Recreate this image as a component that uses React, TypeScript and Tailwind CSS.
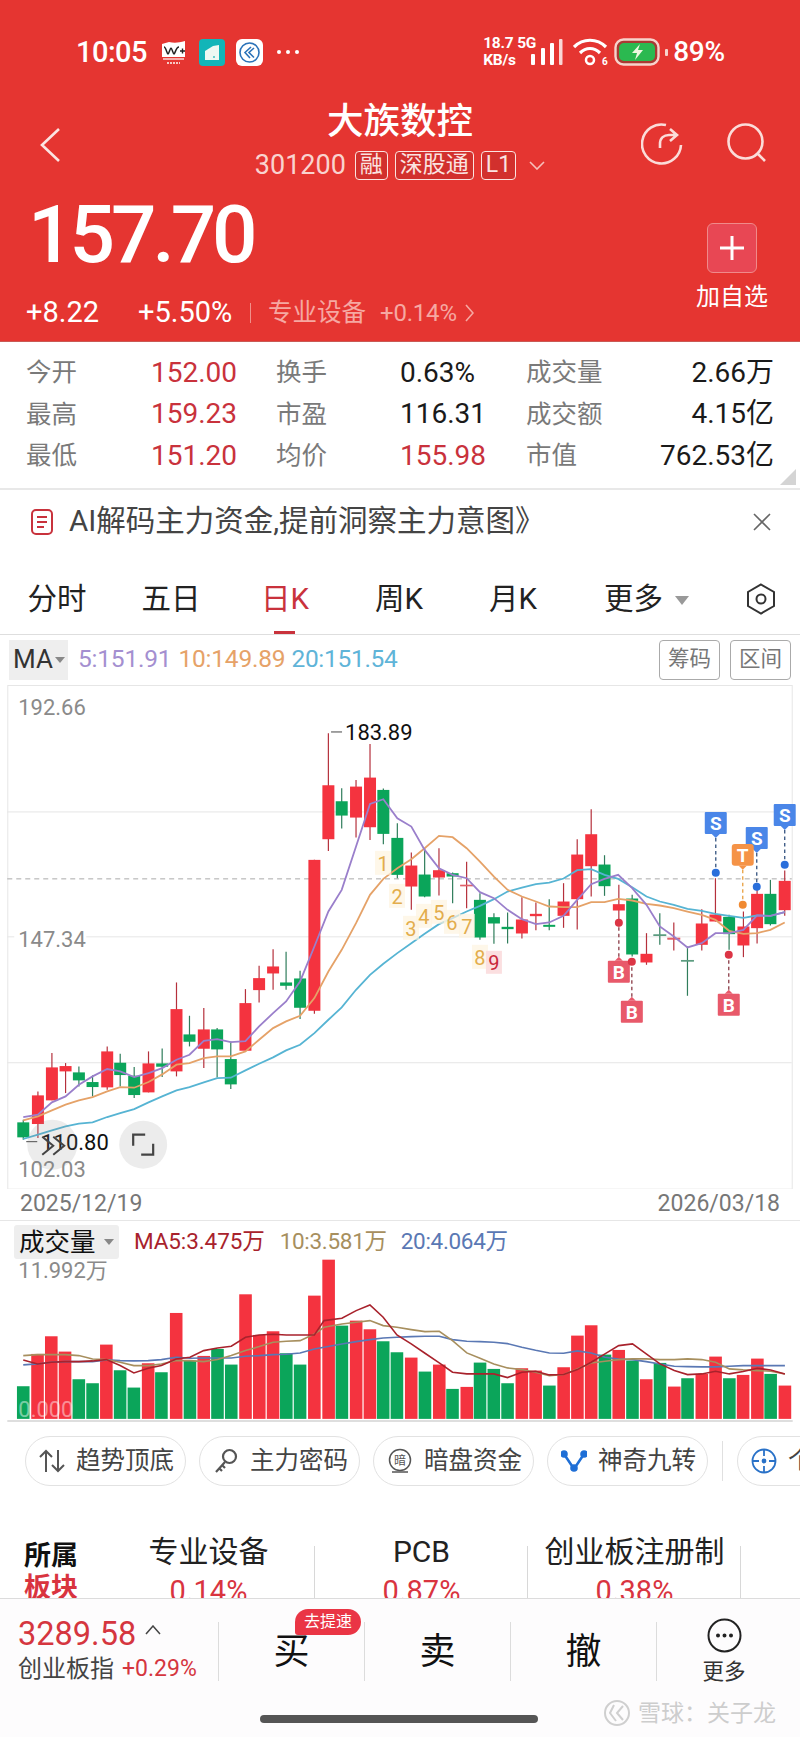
import React from "react";

type Candle = [number, number, number, number, number, 0 | 1];

// measured from the left half of the chart
const leftCandles: Candle[] = [
  [69, 1328, 1373, 1320, 1380, 0], [113, 1247, 1333, 1235, 1375, 1], [155, 1163, 1262, 1120, 1262, 1],
  [196, 1159, 1175, 1150, 1240, 1], [236, 1178, 1202, 1160, 1220, 0], [277, 1207, 1222, 1187, 1250, 0],
  [321, 1115, 1223, 1100, 1230, 1], [360, 1149, 1186, 1122, 1220, 0], [402, 1188, 1246, 1162, 1255, 0],
  [445, 1151, 1238, 1115, 1238, 1], [486, 1151, 1161, 1106, 1192, 0], [529, 988, 1175, 908, 1190, 1],
  [568, 1064, 1086, 1008, 1100, 0], [611, 1049, 1107, 985, 1165, 1], [651, 1049, 1109, 1045, 1193, 0],
  [692, 1138, 1214, 1085, 1228, 0], [736, 970, 1113, 928, 1113, 1], [777, 895, 931, 858, 968, 1],
  [819, 860, 881, 808, 930, 1], [858, 908, 918, 816, 930, 0], [900, 896, 984, 873, 1018, 0],
  [943, 540, 993, 540, 1002, 1], [985, 316, 478, 160, 513, 1], [1025, 364, 407, 325, 446, 0],
  [1068, 320, 413, 300, 473, 1], [1110, 293, 442, 192, 480, 1], [1150, 330, 462, 326, 493, 0],
  [1192, 474, 585, 430, 595, 0],
];

// right half
const rightCandles: Candle[] = [
  [34, 257, 320, 218, 390, 1], [74, 284, 350, 205, 352, 0], [117, 271, 293, 205, 347, 1],
  [158, 280, 290, 278, 370, 0], [200, 316, 318, 246, 385, 1], [240, 360, 473, 340, 480, 0],
  [282, 412, 431, 400, 492, 0], [323, 441, 448, 398, 491, 0], [366, 419, 461, 352, 476, 1],
  [408, 402, 409, 368, 451, 1], [448, 435, 441, 358, 451, 0], [491, 365, 408, 310, 444, 1],
  [532, 224, 358, 178, 449, 1], [574, 163, 259, 88, 350, 1], [614, 254, 319, 226, 348, 0],
  [657, 373, 392, 315, 440, 1], [697, 356, 524, 345, 530, 0], [740, 522, 548, 460, 555, 1],
  [780, 465, 467, 400, 495, 0], [822, 475, 478, 428, 512, 1], [863, 542, 544, 500, 648, 0],
  [906, 431, 495, 388, 512, 1], [947, 404, 425, 295, 425, 1], [988, 411, 463, 405, 510, 0],
  [1031, 440, 497, 395, 532, 1], [1072, 342, 445, 330, 491, 1], [1112, 342, 433, 300, 437, 0],
  [1155, 303, 391, 272, 408, 1],
];

const candles = [
  ...leftCandles.map((c) => ({ x: c[0] / 3, top: 680 + c[1] / 3, bottom: 680 + c[2] / 3, high: 680 + c[3] / 3, low: 680 + c[4] / 3, up: c[5] === 1 })),
  ...rightCandles.map((c) => ({ x: 400 + c[0] / 3, top: 780 + c[1] / 3, bottom: 780 + c[2] / 3, high: 780 + c[3] / 3, low: 780 + c[4] / 3, up: c[5] === 1 })),
];

const linePoints = (left: number[][], right: number[][]) =>
  [
    ...left.map(([x, y]) => `${x / 3},${680 + y / 3}`),
    ...right.map(([x, y]) => `${400 + x / 3},${780 + y / 3}`),
  ].join(" ");

const ma5 = linePoints(
  [[69, 1312], [113, 1305], [155, 1268], [196, 1250], [236, 1215], [277, 1190], [321, 1168], [360, 1175], [402, 1192], [445, 1180], [486, 1165], [529, 1140], [568, 1125], [611, 1083], [651, 1078], [692, 1087], [736, 1084], [777, 1040], [819, 1000], [858, 965], [900, 905], [943, 800], [985, 695], [1025, 630], [1068, 500], [1110, 372], [1150, 358], [1192, 415]],
  [[34, 140], [74, 210], [117, 265], [158, 285], [200, 295], [240, 337], [282, 355], [323, 390], [366, 418], [408, 433], [448, 428], [491, 408], [532, 360], [574, 313], [614, 297], [655, 285], [697, 325], [740, 375], [780, 440], [822, 470], [863, 503], [906, 490], [947, 460], [988, 460], [1031, 450], [1072, 407], [1112, 408], [1155, 397]]
);
const ma10 = linePoints(
  [[69, 1322], [113, 1310], [155, 1292], [196, 1275], [236, 1262], [277, 1252], [321, 1235], [360, 1222], [402, 1224], [445, 1207], [486, 1184], [529, 1155], [568, 1150], [611, 1135], [651, 1130], [692, 1130], [736, 1115], [777, 1080], [819, 1045], [858, 1025], [900, 1008], [943, 955], [985, 875], [1025, 810], [1068, 730], [1110, 645], [1150, 597], [1192, 565]],
  [[34, 238], [74, 205], [117, 168], [158, 172], [200, 205], [240, 245], [282, 290], [323, 330], [366, 350], [408, 365], [448, 380], [491, 382], [532, 382], [574, 367], [614, 367], [655, 357], [697, 362], [740, 372], [780, 377], [822, 385], [863, 395], [906, 405], [947, 420], [988, 453], [1031, 462], [1072, 460], [1112, 450], [1155, 428]]
);
const ma20 = linePoints(
  [[69, 1378], [113, 1365], [155, 1352], [196, 1340], [236, 1332], [277, 1328], [321, 1312], [360, 1300], [402, 1288], [445, 1268], [486, 1250], [529, 1232], [568, 1222], [611, 1208], [651, 1195], [692, 1194], [736, 1172], [777, 1152], [819, 1133], [858, 1112], [900, 1095], [943, 1060], [985, 1020], [1025, 983], [1068, 930], [1110, 885], [1150, 852], [1192, 820]],
  [[34, 490], [74, 462], [117, 433], [158, 415], [200, 395], [240, 378], [282, 358], [323, 335], [366, 323], [408, 313], [448, 308], [491, 296], [532, 271], [574, 268], [614, 285], [655, 297], [697, 322], [740, 350], [780, 365], [822, 375], [863, 387], [906, 393], [947, 402], [988, 408], [1031, 414], [1072, 407], [1112, 408], [1155, 397]]
);

const volumes: [number, number, 0 | 1][] = [
  [45, 532, 0], [73, 435, 1], [100, 382, 1], [127, 428, 1], [154, 511, 0], [181, 523, 0], [208, 407, 1], [235, 484, 0],
  [262, 536, 0], [290, 463, 1], [316, 490, 0], [345, 312, 1], [372, 455, 0], [399, 441, 1], [426, 420, 0], [453, 467, 0],
  [481, 256, 1], [508, 378, 1], [535, 367, 1], [561, 433, 0], [588, 467, 0], [616, 260, 1], [644, 152, 1], [670, 350, 0],
  [698, 335, 1], [725, 361, 1], [751, 397, 0], [778, 430, 0], [806, 446, 1], [833, 488, 0], [861, 467, 1], [887, 540, 0],
  [915, 534, 1], [941, 461, 0], [968, 480, 0], [995, 523, 0], [1023, 478, 1], [1050, 485, 1], [1077, 530, 0], [1105, 475, 1],
  [1132, 380, 1], [1159, 349, 1], [1186, 437, 0], [1213, 423, 1], [1240, 455, 0], [1267, 511, 1], [1294, 462, 0], [1322, 533, 1],
  [1348, 508, 0], [1376, 495, 1], [1403, 443, 1], [1430, 508, 0], [1457, 498, 1], [1485, 449, 1], [1511, 495, 0], [1539, 530, 1],
];

const volPoints = (pts: number[][]) => pts.map(([x, y]) => `${x / 1.96},${1210 + y / 3}`).join(" ");

const volMa5 = volPoints([[45, 453], [73, 465], [100, 460], [127, 458], [154, 458], [181, 456], [208, 452], [235, 470], [262, 492], [290, 478], [316, 470], [345, 450], [372, 445], [399, 425], [426, 417], [453, 412], [481, 385], [508, 378], [535, 376], [561, 378], [588, 378], [616, 378], [635, 335], [670, 328], [698, 305], [725, 288], [751, 325], [778, 378], [806, 405], [833, 433], [861, 462], [887, 490], [915, 495], [941, 495], [968, 495], [995, 506], [1023, 490], [1050, 487], [1077, 498], [1105, 497], [1132, 482], [1159, 460], [1186, 435], [1213, 410], [1240, 405], [1267, 435], [1294, 465], [1322, 485], [1348, 497], [1376, 495], [1403, 487], [1430, 495], [1457, 488], [1485, 478], [1511, 483], [1539, 495]]);
const volMa10 = volPoints([[45, 440], [73, 437], [100, 437], [127, 437], [154, 440], [181, 450], [208, 452], [235, 460], [262, 470], [290, 470], [316, 465], [345, 455], [372, 455], [399, 458], [426, 452], [453, 440], [481, 425], [508, 413], [535, 400], [561, 397], [588, 395], [616, 375], [635, 355], [670, 345], [698, 340], [725, 335], [751, 350], [778, 355], [806, 362], [833, 368], [861, 367], [887, 395], [915, 432], [941, 448], [968, 465], [995, 477], [1023, 482], [1050, 490], [1077, 500], [1105, 497], [1132, 480], [1159, 462], [1186, 457], [1213, 452], [1240, 450], [1267, 450], [1294, 452], [1322, 452], [1348, 450], [1376, 452], [1403, 460], [1430, 480], [1457, 483], [1485, 485], [1511, 487], [1539, 495]]);
const volMa20 = volPoints([[45, 468], [73, 465], [100, 460], [127, 458], [154, 458], [181, 458], [208, 453], [235, 455], [262, 456], [290, 455], [316, 452], [345, 445], [372, 448], [399, 447], [426, 447], [453, 447], [481, 442], [508, 440], [535, 437], [561, 436], [588, 432], [616, 420], [635, 415], [670, 405], [698, 398], [725, 392], [751, 387], [778, 385], [806, 383], [833, 382], [861, 382], [887, 392], [915, 397], [941, 398], [968, 400], [995, 404], [1023, 415], [1050, 424], [1077, 432], [1105, 433], [1132, 426], [1159, 432], [1186, 445], [1213, 450], [1240, 452], [1267, 458], [1294, 465], [1322, 472], [1348, 473], [1376, 474], [1403, 474], [1430, 472], [1457, 470], [1485, 470], [1511, 470], [1539, 470]]);

const nineTurn = [
  { n: "1", x: 383, y: 863 }, { n: "2", x: 397, y: 896 }, { n: "3", x: 411, y: 928 },
  { n: "4", x: 424, y: 916 }, { n: "5", x: 439, y: 912 }, { n: "6", x: 452, y: 922 },
  { n: "7", x: 467, y: 926 }, { n: "8", x: 480, y: 957 },
];

// trade flags, S and T hang above their dot, B below it
const flags = [
  { label: "S", x: 716, top: 812, dot: 873, color: "#4a86e8", dotColor: "#2a6fdb" },
  { label: "S", x: 757, top: 827, dot: 887, color: "#4a86e8", dotColor: "#2a6fdb" },
  { label: "S", x: 785, top: 804, dot: 865, color: "#4a86e8", dotColor: "#2a6fdb" },
  { label: "T", x: 743, top: 844, dot: 905, color: "#f59347", dotColor: "#f08a32" },
  { label: "B", x: 619, top: 961, dot: 923, color: "#e8596a", dotColor: "#dc3545" },
  { label: "B", x: 632, top: 1001, dot: 962, color: "#e8596a", dotColor: "#dc3545" },
  { label: "B", x: 729, top: 994, dot: 955, color: "#e8596a", dotColor: "#dc3545" },
];

const stats = [
  ["今开", "152.00", "换手", "0.63%", "成交量", "2.66万"],
  ["最高", "159.23", "市盈", "116.31", "成交额", "4.15亿"],
  ["最低", "151.20", "均价", "155.98", "市值", "762.53亿"],
];

const KLineChart = () => (
  <svg viewBox="0 680 800 510" className="block w-[800px] h-[510px]">
    <rect x="7.5" y="685.5" width="785" height="504" fill="none" stroke="#e6e6e6" />
    {[812, 937, 1063].map((y) => (
      <line key={y} x1="7" x2="792" y1={y} y2={y} stroke="#e6e6e6" />
    ))}
    <line x1="7" x2="792" y1="879" y2="879" stroke="#a9a9a9" strokeDasharray="5 4" />
    <text x="18" y="715" fontSize="22" fill="#8a8a8a">192.66</text>
    <rect x="14" y="926" width="72" height="24" fill="#fff" />
    <text x="18" y="947" fontSize="22" fill="#8a8a8a">147.34</text>
    <text x="18" y="1177" fontSize="22" fill="#8a8a8a">102.03</text>

    {candles.map((c, i) => (
      <g key={i}>
        <line x1={c.x} x2={c.x} y1={c.high} y2={c.low} stroke={c.up ? "#b5303c" : "#2f7d5b"} strokeWidth="1.2" />
        <rect
          x={c.x - 6}
          y={c.top}
          width="12"
          height={c.bottom - c.top}
          fill={c.up ? "#f4333f" : "#0ba55a"}
          stroke={c.bottom - c.top < 2 ? (c.up ? "#e0606a" : "#5d9b80") : "none"}
        />
      </g>
    ))}

    <polyline points={ma20} fill="none" stroke="#56b4d3" strokeWidth="1.8" />
    <polyline points={ma10} fill="none" stroke="#e5a268" strokeWidth="1.8" />
    <polyline points={ma5} fill="none" stroke="#9a7fcb" strokeWidth="1.8" />

    <line x1="331" x2="342" y1="732" y2="732" stroke="#444" />
    <text x="345" y="740" fontSize="22" fill="#111">183.89</text>

    {nineTurn.map((t) => (
      <g key={t.n}>
        <rect x={t.x - 8} y={t.y - 12} width="16" height="24" fill="#fdf3e0" opacity="0.7" />
        <text x={t.x} y={t.y + 8} fontSize="20" textAnchor="middle" fill="#e3ad4c">{t.n}</text>
      </g>
    ))}
    <rect x="486" y="951" width="16" height="23" fill="#fbdfe0" />
    <text x="494" y="970" fontSize="20" textAnchor="middle" fill="#c9283a">9</text>

    {flags.map((f, i) => {
      const above = f.label !== "B";
      const tipY = above ? f.top + 26 : f.top - 4;
      return (
        <g key={i}>
          <line x1={f.x} x2={f.x} y1={tipY} y2={f.dot} stroke={f.label === "T" ? "#e8a040" : f.label === "S" ? "#33527f" : "#8a3a45"} strokeWidth="1.3" strokeDasharray="3.5 3" />
          <circle cx={f.x} cy={f.dot} r="4" fill={f.dotColor} />
          <rect x={f.x - 11} y={f.top} width="22" height="22" fill={f.color} rx={f.label === "T" ? 3 : 1} />
          <polygon points={above ? `${f.x - 4},${f.top + 22} ${f.x + 4},${f.top + 22} ${f.x},${f.top + 26}` : `${f.x - 4},${f.top} ${f.x + 4},${f.top} ${f.x},${f.top - 4}`} fill={f.color} />
          <text x={f.x} y={f.top + 18} fontSize="19" fontWeight="700" textAnchor="middle" fill="#fff">{f.label}</text>
        </g>
      );
    })}

    <line x1="26" x2="37" y1="1142" y2="1142" stroke="#444" />
    <text x="41" y="1150" fontSize="22" fill="#111">110.80</text>
    <circle cx="52" cy="1145" r="25" fill="#8a8a8a" opacity="0.16" />
    <path d="M42 1137l11 9-11 9M53 1137l11 9-11 9" fill="none" stroke="#444" strokeWidth="2" />
    <circle cx="143" cy="1145" r="24" fill="#ececec" />
    <path d="M133 1146v-11h12M153 1144v11h-12" fill="none" stroke="#444" strokeWidth="2.2" />
  </svg>
);

const VolumeChart = () => (
  <svg viewBox="0 1260 800 164" className="block w-[800px] h-[164px]">
    <line x1="7" x2="793" y1="1422" y2="1422" stroke="#dedede" strokeWidth="2" />
    {volumes.map(([x, top, up], i) => (
      <rect key={i} x={x / 1.96 - 6.3} y={1210 + top / 3} width="12.6" height={1420 - (1210 + top / 3)} fill={up ? "#f4333f" : "#0ba55a"} />
    ))}
    <polyline points={volMa20} fill="none" stroke="#5a78b4" strokeWidth="1.6" />
    <polyline points={volMa10} fill="none" stroke="#a78f5e" strokeWidth="1.6" />
    <polyline points={volMa5} fill="none" stroke="#a8222c" strokeWidth="1.6" />
    <text x="18" y="1279" fontSize="22" fill="#8a8a8a">11.992万</text>
    <text x="18" y="1418" fontSize="22" fill="#fff" opacity="0.45">0.000</text>
  </svg>
);

const StatusIcons = () => (
  <div className="flex items-center">
    <svg width="27" height="27" viewBox="0 0 27 27" className="ml-[13px]">
      <path d="M2 5l7-2c5 1 9 1 16-1v16H2z" fill="#fff" />
      <path d="M0 20h27v7H0z" fill="#e53531" />
      <path d="M3 20h21" stroke="#fff" strokeWidth="1.2" />
      <path d="M4 8c2 0 3 7 4 7s2-6 3-6 2 6 3 6 2-7 5-7" fill="none" stroke="#222" strokeWidth="1.500" />
      <path d="M20 12h5M22.500 9.500v5" stroke="#222" strokeWidth="1.4" />
      <path d="M7 24h13" stroke="#f7c8c4" strokeWidth="2" strokeDasharray="2 1" />
    </svg>
    <svg width="26" height="27" viewBox="0 0 26 27" className="ml-[12px]">
      <rect width="26" height="27" rx="4" fill="#12b5b8" />
      <path d="M6 12l8-5 6-1v15H6z" fill="#eef8f2" />
      <path d="M15 17v2" stroke="#12b5b8" strokeWidth="1.200" />
    </svg>
    <svg width="27" height="27" viewBox="0 0 27 27" className="ml-[11px]">
      <rect width="27" height="27" rx="6" fill="#fff" />
      <circle cx="13.500" cy="13.500" r="9.500" fill="none" stroke="#2a72b8" strokeWidth="1.600" />
      <path d="M15 8l-6 5.500 5 5.500M18 9l-5 4.500 5 5" fill="none" stroke="#2a72b8" strokeWidth="1.600" />
    </svg>
    <div className="ml-[14px] flex gap-[5px]">
      <span className="w-[4px] h-[4px] rounded-full bg-white" />
      <span className="w-[4px] h-[4px] rounded-full bg-white" />
      <span className="w-[4px] h-[4px] rounded-full bg-white" />
    </div>
  </div>
);

const Signal = () => (
  <div className="flex items-center">
    <div className="flex flex-col text-[15.500px] leading-[17px] font-bold w-[48px] tracking-[-0.2px]">
      <span className="whitespace-nowrap">18.7 5G</span>
      <span>KB/s</span>
    </div>
    <svg width="32" height="27" viewBox="0 0 32 27">
      <rect x="0" y="15" width="4" height="11" rx="1" fill="#fff" />
      <rect x="10" y="9" width="4" height="17" rx="1" fill="#fff" />
      <rect x="19" y="4" width="4" height="22" rx="1" fill="#fff" />
      <rect x="28" y="0" width="3.500" height="26" rx="1" fill="#fff" opacity="0.8" />
    </svg>
    <svg width="36" height="28" viewBox="0 0 36 28" className="ml-[10px]">
      <path d="M1 9c9-9 23-9 32 0M7 15c6-6 14-6 20 0" fill="none" stroke="#fff" strokeWidth="3.2" />
      <circle cx="17" cy="22" r="4" fill="none" stroke="#fff" strokeWidth="2.5" />
      <text x="29" y="27" fontSize="10" fontWeight="700" fill="#fff">6</text>
    </svg>
    <svg width="49" height="28" viewBox="0 0 49 28" className="ml-[5px]">
      <rect x="1.500" y="1.500" width="43" height="25" rx="8" fill="#a93a33" stroke="#f7d3cc" strokeWidth="2.400" />
      <rect x="5" y="5" width="36" height="18" rx="5" fill="#2bb950" />
      <path d="M26 6l-8 9h5l-2 7 8-10h-5z" fill="#eef8e0" />
    </svg>
    <span className="ml-[2px] w-[3px] h-[7px] rounded-[1px] bg-[#f7d3cc]" />
    <span className="ml-[5px] text-[28px] leading-none font-medium tracking-[-0.2px]">89%</span>
  </div>
);

const Tag = ({ children }: { children: React.ReactNode }) => (
  <span className="h-[29px] px-[4px] border border-[#fbe3e0] rounded-[4px] bg-[#d2302d] text-[#fbe3e0] text-[23px] leading-[26px] flex items-center">
    {children}
  </span>
);

const Header = () => (
  <header className="h-[342px] bg-[#e53531] text-white border-b border-[#c95a55]">
    <div className="h-[37px]" />
    <div className="flex h-[30px] items-center justify-between pl-[76px] pr-[75px]">
      <div className="flex items-center">
        <span className="text-[29px] leading-none font-medium tracking-[-0.5px]">10:05</span>
        <StatusIcons />
      </div>
      <Signal />
    </div>
    <div className="mt-[37px] grid grid-cols-[1fr_auto_1fr]">
      <div className="pl-[40px] pt-[24px]">
        <svg width="20" height="34" viewBox="0 0 20 34" fill="none" stroke="#fbe4e2" strokeWidth="2.6">
          <path d="M19 1L2 17l17 16" />
        </svg>
      </div>
      <div className="flex flex-col items-center">
        <div className="text-[36.500px] leading-[36px] font-medium h-[46px]">大族数控</div>
        <div className="flex items-center">
          <span className="text-[27px] leading-[30px] text-[#f9d3cf] mr-[9px]">301200</span>
          <div className="flex items-center gap-[7px]">
            <Tag>融</Tag>
            <Tag>深股通</Tag>
            <Tag>L1</Tag>
          </div>
          <svg width="16" height="9" viewBox="0 0 16 9" fill="none" stroke="#f7c0bb" strokeWidth="1.6" className="ml-[13px]">
            <path d="M1 1l7 7 7-7" />
          </svg>
        </div>
      </div>
      <div className="flex justify-end pr-[33px] pt-[19px] gap-[44px]">
        <svg width="42" height="42" viewBox="0 0 42 42" fill="none" stroke="#fbdcd9" strokeWidth="2.6">
          <path d="M25 2A19.500 19.500 0 1 0 40 22" />
          <path d="M19 25v-4c0-6 4-9 9-9h7M29 6l7 6-7 6" />
        </svg>
        <svg width="40" height="40" viewBox="0 0 40 40" fill="none" stroke="#fbdcd9" strokeWidth="2.6">
          <circle cx="18.500" cy="18.500" r="17" />
          <path d="M31 31l7 7" />
        </svg>
      </div>
    </div>
    <div className="flex justify-between mt-[15px]">
      <div className="pl-[24px]">
        <div className="pl-[4px] text-[80px] leading-[80px] font-medium tracking-[-4px]">157.70</div>
        <div className="flex items-center mt-[26px] h-[24px] whitespace-nowrap pl-[2px]">
          <span className="text-[29px] w-[112px]">+8.22</span>
          <span className="text-[29px] w-[112px]">+5.50%</span>
          <span className="w-px h-[20px] bg-[#f0908a]" />
          <span className="ml-[17px] text-[24.500px] text-[#f6a8a2]">专业设备</span>
          <span className="ml-[14px] text-[24px] text-[#f6a8a2] tracking-[-0.2px]">+0.14%</span>
          <svg width="9" height="18" viewBox="0 0 9 18" fill="none" stroke="#f6a8a2" strokeWidth="1.6" className="ml-[8px]">
            <path d="M1 1l7 8-7 8" />
          </svg>
        </div>
      </div>
      <div className="flex flex-col items-center pr-[32px] mt-[28px]">
        <div className="w-[50px] h-[50px] rounded-[6px] bg-[#e84754] border border-[#f08a8a] flex items-center justify-center">
          <svg width="26" height="26" viewBox="0 0 26 26" stroke="#fff" strokeWidth="3">
            <path d="M13 1v24M1 13h24" />
          </svg>
        </div>
        <div className="mt-[9px] text-[24px] leading-[30px] whitespace-nowrap">加自选</div>
      </div>
    </div>
  </header>
);

const Stats = () => (
  <section className="relative h-[148px] border-b-2 border-[#e8e8e8] pt-[10px] pl-[26px] pr-[26px]">
    <div className="grid grid-cols-[125px_125px_124px_126px_100px_148px] auto-rows-[41.5px] items-center text-[25.500px]">
      {stats.map((row) => (
        <React.Fragment key={row[0]}>
          <span className="text-[#7a7a7a]">{row[0]}</span>
          <span className="text-[#c9323c] text-[28px]">{row[1]}</span>
          <span className="text-[#7a7a7a]">{row[2]}</span>
          <span className={row[2] === "均价" ? "text-[#c9323c] text-[28px]" : "text-[#1a1a1a] text-[28px]"}>{row[3]}</span>
          <span className="text-[#7a7a7a] whitespace-nowrap">{row[4]}</span>
          <span className="text-[#1a1a1a] text-[28px] text-right whitespace-nowrap">{row[5]}</span>
        </React.Fragment>
      ))}
    </div>
    <span className="absolute right-[4px] bottom-[3px] w-0 h-0 border-l-[16px] border-l-transparent border-b-[16px] border-b-[#d4d4d4]" />
  </section>
);

const Banner = () => (
  <section className="h-[67px] flex items-center pl-[31px] pr-[29px] pb-[3px]">
    <svg width="22" height="26" viewBox="0 0 22 26" fill="none" stroke="#c8323c" strokeWidth="2" className="shrink-0">
      <rect x="1" y="1" width="20" height="24" rx="4" />
      <path d="M6 8h10M6 13h10M6 18h7" />
    </svg>
    <span className="ml-[16px] text-[29.500px] leading-none text-[#444] whitespace-nowrap">AI解码主力资金,提前洞察主力意图》</span>
    <svg width="18" height="18" viewBox="0 0 18 18" stroke="#666" strokeWidth="1.6" className="ml-auto">
      <path d="M1 1l16 16M17 1L1 17" />
    </svg>
  </section>
);

const tabs = ["分时", "五日", "日K", "周K", "月K"];

const Tabs = () => (
  <section className="relative h-[78px] border-b border-[#dedede] flex items-center text-[29.500px] text-[#222] pt-[8px]">
    {tabs.map((t) => (
      <span key={t} className={t === "日K" ? "w-[114px] text-center text-[#c9323c]" : "w-[114px] text-center"}>
        {t}
      </span>
    ))}
    <span className="ml-[34px] flex items-center">
      更多
      <span className="ml-[12px] mt-[2px] w-0 h-0 border-x-[7px] border-x-transparent border-t-[9px] border-t-[#999]" />
    </span>
    <svg width="30" height="32" viewBox="0 0 30 32" fill="none" stroke="#333" strokeWidth="2" className="ml-auto mr-[24px]">
      <path d="M15 1.500l13 7.500v14l-13 7.500-13-7.500V9z" />
      <circle cx="15" cy="16" r="4.500" />
    </svg>
    <span className="absolute left-[274px] bottom-0 w-[21px] h-[3px] bg-[#c9323c]" />
  </section>
);

const MaRow = () => (
  <section className="h-[45px] flex items-center pl-[9px] pr-[9px] pt-[5px]">
    <div className="h-[40px] w-[59px] bg-[#eeeeee] flex items-center pl-[4px] text-[26px] text-[#333]">
      MA
      <span className="ml-[2px] w-0 h-0 border-x-[5px] border-x-transparent border-t-[6px] border-t-[#888]" />
    </div>
    <span className="ml-[10px] text-[24.500px] text-[#a48fd0] tracking-[-0.2px]">5:151.91</span>
    <span className="ml-[7px] text-[24.500px] text-[#e6a268] tracking-[-0.2px]">10:149.89</span>
    <span className="ml-[6px] text-[24.500px] text-[#5fb4d8] tracking-[-0.3px]">20:151.54</span>
    <div className="ml-auto flex gap-[10px]">
      <span className="w-[61px] h-[40px] border border-[#aaa] rounded-[4px] flex items-center justify-center text-[21.500px] text-[#777]">筹码</span>
      <span className="w-[61px] h-[40px] border border-[#aaa] rounded-[4px] flex items-center justify-center text-[21.500px] text-[#777]">区间</span>
    </div>
  </section>
);

const Chip = ({ icon, label }: { icon: React.ReactNode; label: string }) => (
  <div className="w-[161px] h-[50px] shrink-0 rounded-full border border-[#e2e2e2] flex items-center pl-[13px] text-[24.500px] text-[#444] whitespace-nowrap">
    <span className="w-[26px] h-[26px] flex items-center justify-center">{icon}</span>
    <span className="ml-[11px]">{label}</span>
  </div>
);

const Chips = () => (
  <section className="flex items-center pl-[25px] pt-[13px] overflow-hidden">
    <div className="flex gap-[13px]">
      <Chip
        label="趋势顶底"
        icon={
          <svg width="26" height="24" viewBox="0 0 26 24" fill="none" stroke="#555" strokeWidth="2">
            <path d="M7 23V2M1 8l6-6 6 6M19 1v21M13 16l6 6 6-6" />
          </svg>
        }
      />
      <Chip
        label="主力密码"
        icon={
          <svg width="24" height="26" viewBox="0 0 24 26" fill="none" stroke="#555" strokeWidth="2.2">
            <circle cx="15.500" cy="8.500" r="6.500" />
            <path d="M11 14L2 24M5 20l3 3M8 17l3 3" />
          </svg>
        }
      />
      <Chip
        label="暗盘资金"
        icon={
          <svg width="24" height="26" viewBox="0 0 24 26" fill="none" stroke="#555" strokeWidth="1.5">
            <circle cx="12" cy="12" r="10.500" />
            <path d="M4 24h16" />
            <text x="12" y="17" fontSize="12" textAnchor="middle" fill="#555" stroke="none">暗</text>
          </svg>
        }
      />
      <Chip
        label="神奇九转"
        icon={
          <svg width="26" height="22" viewBox="0 0 26 22" fill="none" stroke="#1f6fd6" strokeWidth="2.600">
            <path d="M3 4l10 15L23 4" />
            <circle cx="3" cy="4" r="2.500" fill="#1f6fd6" />
            <circle cx="23" cy="4" r="2.500" fill="#1f6fd6" />
            <circle cx="13" cy="18" r="2.500" fill="#1f6fd6" />
          </svg>
        }
      />
    </div>
    <span className="ml-[14px] w-px h-[40px] bg-[#e0e0e0] shrink-0" />
    <div className="ml-[14px] shrink-0">
      <Chip
        label="个股"
        icon={
          <svg width="26" height="26" viewBox="0 0 26 26" fill="none" stroke="#2a72c8" strokeWidth="1.800">
            <circle cx="13" cy="13" r="11.500" />
            <path d="M13 1v7M13 18v7M1 13h7M18 13h7" />
            <circle cx="13" cy="13" r="1.500" fill="#2a72c8" />
          </svg>
        }
      />
    </div>
  </section>
);

const sectors = [
  { name: "专业设备", pct: "0.14%" },
  { name: "PCB", pct: "0.87%" },
  { name: "创业板注册制", pct: "0.38%" },
];

const Sectors = () => (
  <section className="h-[112px] overflow-hidden flex pt-[49px]">
    <div className="w-[102px] pl-[24px] pt-[5px] shrink-0 text-[27px] leading-[32px] font-bold">
      <div className="text-[#111]">所属</div>
      <div className="text-[#d9343f]">板块</div>
    </div>
    {sectors.map((s) => (
      <React.Fragment key={s.name}>
        <div className="w-[213px] shrink-0 flex flex-col items-center">
          <span className="text-[30px] leading-[34px] text-[#222] whitespace-nowrap">{s.name}</span>
          <span className="mt-[5px] text-[29px] leading-[34px] text-[#d9343f]">{s.pct}</span>
        </div>
        <span className="w-px h-[56px] mt-[11px] -ml-px bg-[#d8d8d8] shrink-0" />
      </React.Fragment>
    ))}
  </section>
);

const Divider = () => <span className="w-px h-[59px] bg-[#dcdcdc] shrink-0" />;

const BottomBar = () => (
  <footer className="flex-1 border-t border-[#dcdcdc] bg-[#fdfcfd]">
    <div className="h-[105px] flex items-center">
      <div className="w-[218px] pl-[18px] shrink-0 -mt-[3px]">
        <div className="flex items-center h-[34px]">
          <span className="text-[32.500px] leading-none text-[#d5363f]">3289.58</span>
          <svg width="16" height="10" viewBox="0 0 16 10" fill="none" stroke="#444" strokeWidth="1.500" className="ml-[9px] -mt-[10px]">
            <path d="M1 9l7-8 7 8" />
          </svg>
        </div>
        <div className="flex items-center whitespace-nowrap mt-[3px]">
          <span className="text-[24px] leading-[28px] text-[#444]">创业板指</span>
          <span className="ml-[8px] text-[23px] leading-[28px] text-[#d5363f]">+0.29%</span>
        </div>
      </div>
      <Divider />
      <div className="relative w-[145px] shrink-0 text-center text-[36px] text-[#111]">
        买
        <span className="absolute left-[76px] -top-[16px] w-[66px] h-[26px] rounded-t-[13px] rounded-br-[13px] rounded-bl-[3px] bg-[#ea3545] text-white text-[16px] leading-[26px]">
          去提速
        </span>
      </div>
      <Divider />
      <div className="w-[145px] shrink-0 text-center text-[36px] text-[#111]">卖</div>
      <Divider />
      <div className="w-[145px] shrink-0 text-center text-[36px] text-[#111]">撤</div>
      <Divider />
      <div className="flex-1 flex flex-col items-center pr-[9px] -mt-[1px]">
        <svg width="35" height="35" viewBox="0 0 35 35" fill="none" stroke="#222" strokeWidth="2">
          <circle cx="17.500" cy="17.500" r="16" />
          <circle cx="11" cy="17.500" r="1" fill="#222" />
          <circle cx="17.500" cy="17.500" r="1" fill="#222" />
          <circle cx="24" cy="17.500" r="1" fill="#222" />
        </svg>
        <span className="mt-[6px] text-[21.500px] leading-[26px] text-[#333]">更多</span>
      </div>
    </div>
    <div className="relative h-[33px]">
      <div className="absolute left-[260px] top-[11px] w-[278px] h-[8px] rounded-full bg-[#555]" />
      <div className="absolute left-[603px] -top-[5px] flex items-center">
        <svg width="28" height="28" viewBox="0 0 28 28" fill="none" stroke="#cfcfcf" strokeWidth="2">
          <circle cx="14" cy="14" r="12" />
          <path d="M11 6l-4 8 6 8M20 7l-6 7 6 7" />
        </svg>
        <span className="ml-[7px] text-[23px] leading-none text-[#cdcdcd] whitespace-nowrap">雪球：关子龙</span>
      </div>
    </div>
  </footer>
);

export default function App() {
  return (
    <div className="w-[800px] h-[1737px] overflow-hidden bg-white flex flex-col font-['Roboto','Noto_Sans_CJK_SC',sans-serif]">
      <Header />
      <Stats />
      <Banner />
      <Tabs />
      <MaRow />
      <KLineChart />
      <div className="h-[32px] flex items-center justify-between pl-[20px] pr-[20px] text-[23px] text-[#777] border-b border-[#e6e6e6]">
        <span>2025/12/19</span>
        <span>2026/03/18</span>
      </div>
      <section className="h-[38px] flex items-center pl-[14px] pt-[4px]">
        <div className="w-[105px] h-[34px] bg-[#eeeeee] rounded-[3px] flex items-center pl-[5px] text-[25.500px] text-[#111]">
          成交量
          <span className="ml-[8px] w-0 h-0 border-x-[5px] border-x-transparent border-t-[6px] border-t-[#888]" />
        </div>
        <span className="ml-[15px] text-[22.500px] text-[#a8222c] tracking-[-0.1px]">MA5:3.475万</span>
        <span className="ml-[15px] text-[22.500px] text-[#a78f5e] tracking-[-0.3px]">10:3.581万</span>
        <span className="ml-[14px] text-[22.500px] text-[#5a78b4] tracking-[-0.3px]">20:4.064万</span>
      </section>
      <VolumeChart />
      <Chips />
      <Sectors />
      <BottomBar />
    </div>
  );
}
